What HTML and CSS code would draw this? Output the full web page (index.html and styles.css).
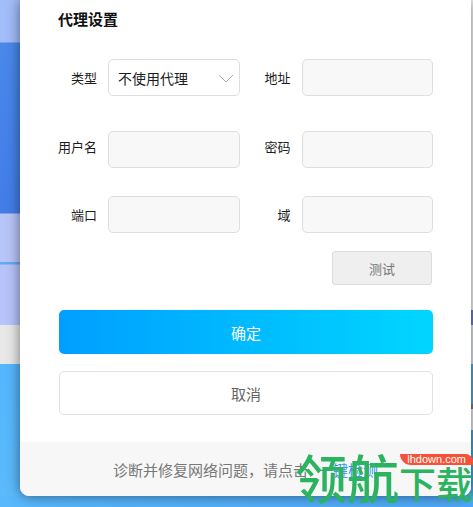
FILE: index.html
```html
<!DOCTYPE html>
<html lang="zh-CN">
<head>
<meta charset="utf-8">
<meta name="viewport" content="width=device-width, initial-scale=1">
<title>代理设置</title>
<link rel="stylesheet" href="styles.css">
</head>
<body>
<main class="dialog">
  <form class="content">
    <h1 class="title">代理设置</h1>
    <div class="fields">
      <label class="label" for="type">类型</label>
      <div class="select-wrap">
        <select class="control select" id="type"><option>不使用代理</option></select>
        <svg class="chevron" viewBox="0 0 16 9" aria-hidden="true"><path d="M1 1l7 7 7-7"/></svg>
      </div>
      <label class="label" for="address">地址</label>
      <input class="control" id="address" type="text">
    </div>
    <div class="fields fields-user">
      <label class="label" for="user">用户名</label>
      <input class="control" id="user" type="text">
      <label class="label" for="password">密码</label>
      <input class="control" id="password" type="password">
    </div>
    <div class="fields">
      <label class="label" for="port">端口</label>
      <input class="control" id="port" type="text">
      <label class="label" for="domain">域</label>
      <input class="control" id="domain" type="text">
    </div>
    <button class="test" type="button">测试</button>
    <div class="actions">
      <button class="action confirm" type="button">确定</button>
      <button class="action cancel" type="button">取消</button>
    </div>
  </form>
  <footer class="footer">诊断并修复网络问题，请点击<a class="link" href="#">一键检测</a></footer>
</main>
<div class="watermark">
  <span class="mark-large">领航</span>
  <span class="mark-side"><span class="mark-site">lhdown.com</span><span class="mark-small">下载</span></span>
</div>
</body>
</html>
```
FILE: styles.css
```css
* { box-sizing: border-box; }

html { height: 100%; }

body {
  position: relative;
  min-height: 100%;
  margin: 0;
  padding: 0 2px 11px 20px;
  overflow: hidden;
  font-family: "Noto Sans CJK SC", sans-serif;
  color: #1c1c1c;
  background:
    linear-gradient(#f4f4f4 310px, #6c80c4 310px 325px, #dfe4ea 325px 364px, #55a8dc 364px 404px, #85748a 404px 409px, #e4e8ec 409px 430px, #4a9fe0 430px) right top / 2px 496px no-repeat,
    linear-gradient(#a3bdfa 42px, #4a88ea 43px, #427de8 213px, #b8c5f8 214px 262px, #66a9f4 262px 264px, #b7c3fa 265px 325px, #e8e8e8 325px 364px, #54b6fd 364px, #5bbafc 496px) left top / 20px 496px no-repeat,
    linear-gradient(90deg, #58b8fc, #4ea7f6);
}

.dialog {
  overflow: hidden;
  background: #fff;
  border-radius: 0 0 9px 9px;
  box-shadow: 0 0 13px rgba(0, 0, 0, 0.5);
}

.content { padding: 7px 38px 27px 37px; }

.title {
  margin: 0 0 28px 1px;
  font-size: 15px;
  line-height: 24px;
  font-weight: 700;
  color: #111;
}

.fields {
  display: grid;
  grid-template-columns: 40px 1fr 40px 1fr;
  column-gap: 11px;
  align-items: center;
}

.fields-user { margin: 35px 0 28px; }
.fields-user .label { padding-bottom: 6px; }

.label {
  font-size: 13px;
  line-height: 20px;
  text-align: right;
  white-space: nowrap;
}

.control {
  display: block;
  width: 100%;
  min-width: 0;
  height: 37px;
  padding: 0 9px;
  border: 1px solid #dedede;
  border-radius: 5px;
  background: #f8f8f8;
  color: inherit;
  font: 14px "Noto Sans CJK SC", sans-serif;
}

.select-wrap { position: relative; }

.select {
  padding: 0 5px 0 9px;
  appearance: none;
  background: #fff;
}

.chevron {
  position: absolute;
  top: 15px;
  right: 6px;
  width: 16px;
  height: 9px;
  fill: none;
  stroke: #aaa;
  pointer-events: none;
}

.test {
  display: block;
  width: 100px;
  height: 34px;
  margin: 18px 1px 0 auto;
  padding: 0;
  border: 1px solid #dcdcdc;
  border-radius: 3px;
  background: #efefef;
  color: #777;
  font: 13px "Noto Sans CJK SC", sans-serif;
}

.actions {
  display: grid;
  gap: 17px;
  margin: 25px 0 0 2px;
}

.action {
  height: 44px;
  padding: 0;
  border: 1px solid #e2e2e2;
  border-radius: 5px;
  background: #fff;
  color: #666;
  font: 15px "Noto Sans CJK SC", sans-serif;
}

.confirm {
  border: 0;
  background: linear-gradient(90deg, #009fff, #00d6ff);
  color: #fff;
}

.footer {
  padding: 16px 0 14px 93px;
  background: #f7f7f7;
  font-size: 15px;
  line-height: 24px;
  color: #777;
  white-space: nowrap;
}

.link {
  margin-left: 10px;
  color: #3d94f5;
  text-decoration: none;
}

.watermark {
  position: absolute;
  right: 0;
  bottom: 6px;
  display: flex;
  align-items: flex-end;
  color: #2bb35f;
  font-weight: 500;
  white-space: nowrap;
  pointer-events: none;
}

.mark-large {
  font-size: 52px;
  line-height: 48px;
}

.mark-side {
  display: flex;
  flex-direction: column;
  align-items: flex-end;
}

.mark-site {
  width: 73px;
  padding-right: 7px;
  border-radius: 0 8px 0 12px;
  background: #f65239;
  color: #fff;
  font: 11px/11px "Liberation Sans", sans-serif;
  text-align: right;
}

.mark-small {
  font-size: 37px;
  line-height: 36px;
}
```
